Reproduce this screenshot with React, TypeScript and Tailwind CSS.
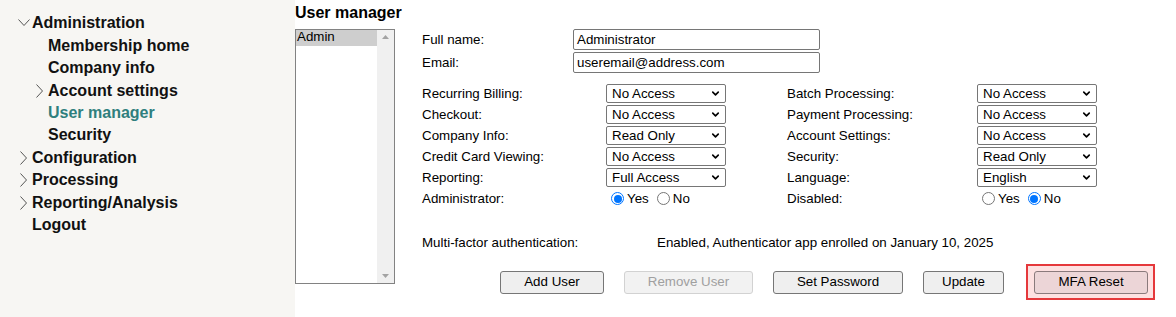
import { ChevronDown } from 'lucide-react'

const perms: [string, string, string, string][] = [
  ['Recurring Billing:', 'No Access', 'Batch Processing:', 'No Access'],
  ['Checkout:', 'No Access', 'Payment Processing:', 'No Access'],
  ['Company Info:', 'Read Only', 'Account Settings:', 'No Access'],
  ['Credit Card Viewing:', 'No Access', 'Security:', 'Read Only'],
  ['Reporting:', 'Full Access', 'Language:', 'English'],
]

function Chevron({ open }: { open?: boolean }) {
  return open ? (
    <svg width="12" height="8" viewBox="0 0 12 8" className="text-[#555]">
      <polyline points="0.5,0.5 6,6.5 11.5,0.5" fill="none" stroke="currentColor" strokeWidth="1" />
    </svg>
  ) : (
    <svg width="8" height="14" viewBox="0 0 8 14" className="ml-[2px] text-[#555]">
      <polyline points="0.5,0.5 6.5,7 0.5,13.5" fill="none" stroke="currentColor" strokeWidth="1" />
    </svg>
  )
}

function NavItem({ label, sub, icon, active }: { label: string; sub?: boolean; icon?: 'open' | 'closed'; active?: boolean }) {
  return (
    <div className={`flex items-center h-[22.45px] ${sub ? 'pl-[34px]' : 'pl-[18px]'}`}>
      <span className="w-[14px] flex items-center">
        {icon === 'open' && <Chevron open />}
        {icon === 'closed' && <Chevron />}
      </span>
      <span className={active ? 'text-[#2f7f7d]' : 'text-[#111]'}>{label}</span>
    </div>
  )
}

function Select({ value }: { value: string }) {
  return (
    <div className="h-[19px] w-[120px] border border-[#767676] rounded-[2px] bg-white flex items-center justify-between pl-[5px] pr-[4px]">
      <span className="leading-none">{value}</span>
      <ChevronDown size={11} strokeWidth={3.5} className="text-black" />
    </div>
  )
}

function Radio({ checked }: { checked?: boolean }) {
  return checked ? (
    <span className="block w-[13px] h-[13px] rounded-full border border-[#0075ff] bg-white flex items-center justify-center">
      <span className="block w-[8px] h-[8px] rounded-full bg-[#0075ff]" />
    </span>
  ) : (
    <span className="block w-[13px] h-[13px] rounded-full border border-[#767676] bg-white" />
  )
}

function YesNo({ yes }: { yes: boolean }) {
  return (
    <div className="flex items-center pl-[5px]">
      <Radio checked={yes} />
      <span className="ml-[3px]">Yes</span>
      <span className="ml-[8px]"><Radio checked={!yes} /></span>
      <span className="ml-[3px]">No</span>
    </div>
  )
}

function Btn({ children, disabled, w, pink }: { children: string; disabled?: boolean; w: string; pink?: boolean }) {
  return (
    <button
      className={`block h-[23px] ${w} rounded-[3px] border text-[13.33px] ${
        disabled
          ? 'border-[#d2d2d2] bg-[#f2f2f2] text-[#a0a0a0]'
          : pink
          ? 'border-[#8a7a7c] bg-[#ecd5d7] text-black'
          : 'border-[#767676] bg-[#efefef] text-black'
      }`}
    >
      {children}
    </button>
  )
}

export default function App() {
  return (
    <div className="flex w-[1176px] h-[317px] bg-white font-['Liberation_Sans',Arial,sans-serif] text-black">
      <nav className="w-[295px] shrink-0 bg-[#f7f6f3] pt-[12px] text-[16px] font-bold">
        <NavItem label="Administration" icon="open" />
        <NavItem label="Membership home" sub />
        <NavItem label="Company info" sub />
        <NavItem label="Account settings" sub icon="closed" />
        <NavItem label="User manager" sub active />
        <NavItem label="Security" sub />
        <NavItem label="Configuration" icon="closed" />
        <NavItem label="Processing" icon="closed" />
        <NavItem label="Reporting/Analysis" icon="closed" />
        <NavItem label="Logout" />
      </nav>

      <main className="flex-1 pt-[4px]">
        <h1 className="text-[16px] font-bold leading-[18px]">User manager</h1>
        <div className="flex mt-[7px] text-[13.33px]">
          <div className="w-[100px] h-[255px] border border-[#828282] flex">
            <div className="flex-1">
              <div className="h-[16px] bg-[#cecece] leading-[14px] pl-[1px]">Admin</div>
            </div>
            <div className="w-[17px] bg-[#f0f0f0] flex flex-col items-center justify-between py-[5px]">
              <svg width="7" height="4" viewBox="0 0 7 4"><polygon points="0,4 3.5,0 7,4" fill="#a3a3a3" /></svg>
              <svg width="7" height="4" viewBox="0 0 7 4"><polygon points="0,0 3.5,4 7,0" fill="#a3a3a3" /></svg>
            </div>
          </div>

          <div className="ml-[27px] flex flex-col">
            <div className="flex items-center h-[21px]">
              <span className="w-[151px]">Full name:</span>
              <div className="w-[247px] h-[21px] border border-[#767676] rounded-[2px] px-[3px] flex items-center">Administrator</div>
            </div>
            <div className="flex items-center h-[21px] mt-[2px]">
              <span className="w-[151px]">Email:</span>
              <div className="w-[247px] h-[21px] border border-[#767676] rounded-[2px] px-[3px] flex items-center">useremail@address.com</div>
            </div>

            <div className="grid grid-cols-[184px_120px_61px_190px_120px] auto-rows-[19px] gap-y-[2px] mt-[11px] items-center">
              {perms.map(([l1, v1, l2, v2]) => (
                <div key={l1} className="contents">
                  <span>{l1}</span>
                  <Select value={v1} />
                  <span />
                  <span>{l2}</span>
                  <Select value={v2} />
                </div>
              ))}
              <span>Administrator:</span>
              <YesNo yes />
              <span />
              <span>Disabled:</span>
              <YesNo yes={false} />
            </div>

            <div className="flex h-[16px] leading-[16px] mt-[27px]">
              <span className="w-[235px]">Multi-factor authentication:</span>
              <span>Enabled, Authenticator app enrolled on January 10, 2025</span>
            </div>

            <div className="flex items-center mt-[13px] pl-[78px]">
              <Btn w="w-[104px]">Add User</Btn>
              <span className="ml-[20px]"><Btn w="w-[129px]" disabled>Remove User</Btn></span>
              <span className="ml-[20px]"><Btn w="w-[130px]">Set Password</Btn></span>
              <span className="ml-[20px]"><Btn w="w-[81px]">Update</Btn></span>
              <div className="ml-[22px] h-[36px] border-2 border-[#e5383b] bg-[#fde1e1] pl-[6px] pr-[5px] flex items-center">
                <Btn w="w-[114px]" pink>MFA Reset</Btn>
              </div>
            </div>
          </div>
        </div>
      </main>
    </div>
  )
}
